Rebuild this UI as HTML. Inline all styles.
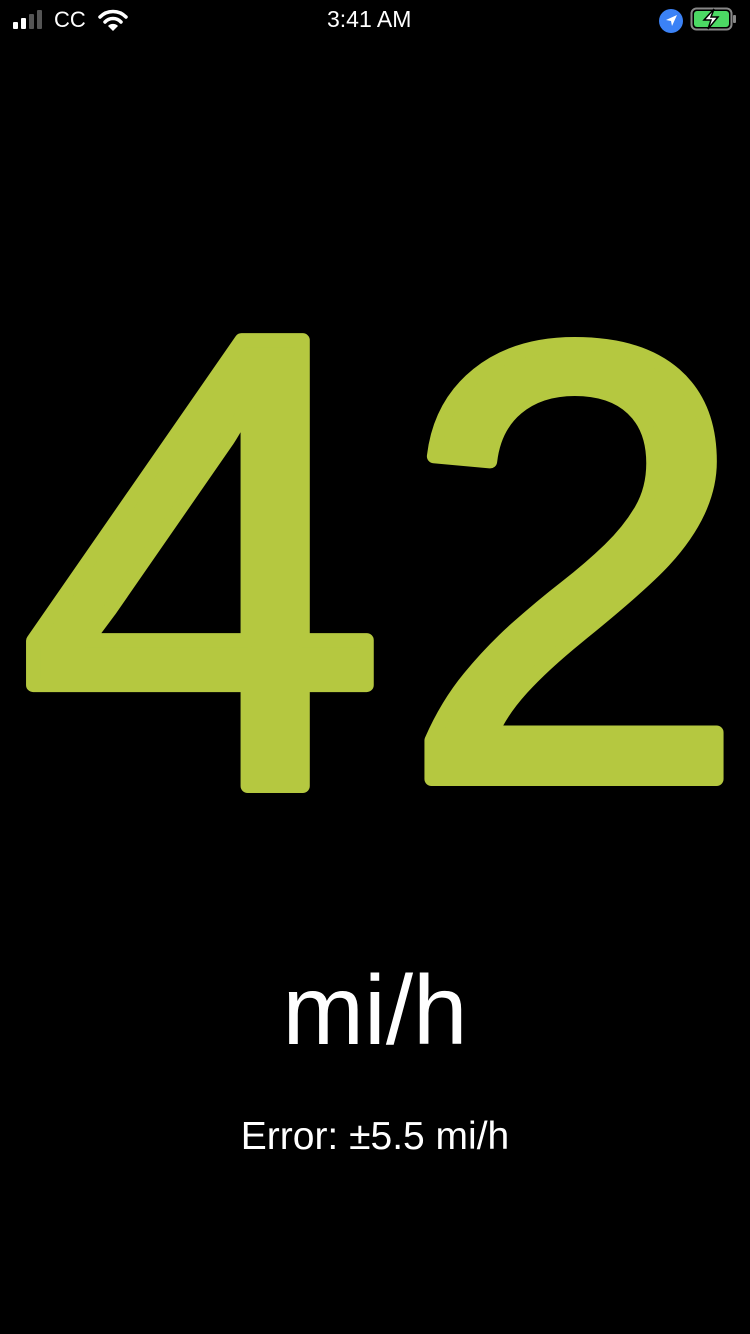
<!DOCTYPE html>
<html><head><meta charset="utf-8"><style>
html,body{margin:0;padding:0;background:#000;width:750px;height:1334px;overflow:hidden;font-family:"Liberation Sans",sans-serif;color:#fff}
.t{position:absolute;white-space:nowrap}
</style></head><body>
<div class="t" style="left:327px;top:6px;font-size:23px;">3:41 AM</div>
<div style="position:absolute;left:13px;top:22px;width:5px;height:7px;background:#fff;border-radius:1px"></div>
<div style="position:absolute;left:21px;top:18px;width:5px;height:11px;background:#fff;border-radius:1px"></div>
<div style="position:absolute;left:29px;top:14px;width:5px;height:15px;background:#555;border-radius:1px"></div>
<div style="position:absolute;left:37px;top:10px;width:5px;height:19px;background:#555;border-radius:1px"></div>
<div class="t" style="left:54px;top:7px;font-size:22px;">CC</div>
<svg style="position:absolute;left:97px;top:9px" width="32" height="24" viewBox="0 0 32 24"><path d="M3 8 A18 18 0 0 1 29 8" stroke="#fff" stroke-width="3.5" fill="none" stroke-linecap="round"/><path d="M8 13 A11 11 0 0 1 24 13" stroke="#fff" stroke-width="3.5" fill="none" stroke-linecap="round"/><path d="M16 22 L11 17 A7 7 0 0 1 21 17 Z" fill="#fff"/></svg>
<svg style="position:absolute;left:658px;top:8px" width="26" height="26"><circle cx="13" cy="13" r="12" fill="#3b82f6"/><path d="M19 7 L8 12 L13 13 L14 18 Z" fill="#fff"/></svg>
<svg style="position:absolute;left:690px;top:7px" width="48" height="26"><rect x="1.5" y="1.5" width="40" height="21" rx="5" fill="none" stroke="#888" stroke-width="2"/><rect x="4" y="4" width="35" height="16" rx="3" fill="#4cd964"/><rect x="43" y="8" width="3" height="8" rx="1" fill="#888"/><path d="M24 2 L14 13 L21 13 L18 22 L28 10 L21 10 Z" fill="#fff" stroke="#000" stroke-width="1.5"/></svg>
<svg style="position:absolute;left:0;top:0" width="750" height="1334">
<g fill="#b5c840" stroke="#b5c840" stroke-width="14" stroke-linejoin="round" font-family="Liberation Sans, sans-serif">
<text x="18" y="786" font-size="648" textLength="368" lengthAdjust="spacingAndGlyphs">4</text>
<text x="400" y="779" font-size="623" textLength="348" lengthAdjust="spacingAndGlyphs">2</text>
</g></svg>
<div class="t" style="left:0;width:750px;text-align:center;top:958px;font-size:98px;line-height:104px">mi/h</div>
<div class="t" style="left:0;width:750px;text-align:center;top:1114px;font-size:39px;line-height:46px">Error: ±5.5 mi/h</div>
</body></html>
